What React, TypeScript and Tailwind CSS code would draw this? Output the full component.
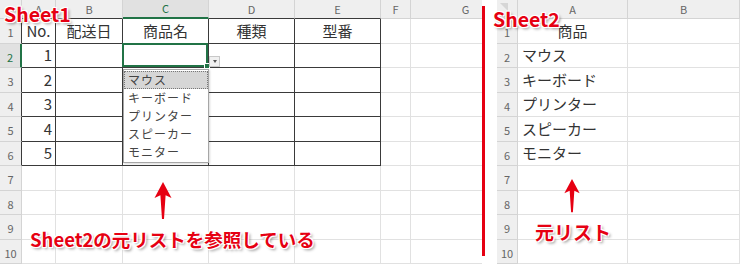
import React from "react";

const JP = "font-['Noto_Sans_CJK_JP','Noto_Sans',sans-serif]";
const LABEL =
  "font-bold text-[#e60012] leading-none [text-shadow:-1px_-1px_0_#fff,1px_-1px_0_#fff,-1px_1px_0_#fff,1px_1px_0_#fff,0_0_3px_#fff,2px_2px_3px_rgba(0,0,0,0.45)]";

const leftCols = ["A", "B", "C", "D", "E", "F", "G"];
const leftRows: string[][] = [
  ["No.", "配送日", "商品名", "種類", "型番", "", ""],
  ["1", "", "", "", "", "", ""],
  ["2", "", "", "", "", "", ""],
  ["3", "", "", "", "", "", ""],
  ["4", "", "", "", "", "", ""],
  ["5", "", "", "", "", "", ""],
  ["", "", "", "", "", "", ""],
  ["", "", "", "", "", "", ""],
  ["", "", "", "", "", "", ""],
  ["", "", "", "", "", "", ""],
];

const items = ["マウス", "キーボード", "プリンター", "スピーカー", "モニター"];

function UpArrow({ className }: { className: string }) {
  return (
    <svg viewBox="0 0 20 38" className={className}>
      <path d="M10 0 L18.5 16 L12.6 13.2 L11 37 L9 37 L7.4 13.2 L1.5 16 Z" fill="#e60012" />
    </svg>
  );
}

function Dropdown() {
  return (
    <>
      <div className="absolute -left-px -top-px z-10 h-[calc(100%+1px)] w-[calc(100%+1px)] border-2 border-[#217346]">
        <div className="absolute -bottom-[4px] -right-[4px] h-[6px] w-[6px] border border-white bg-[#217346]" />
      </div>
      <div className="absolute left-[calc(100%+1px)] top-[12px] z-10 flex h-[11px] w-[11px] items-center justify-center border border-[#c8c8c8] bg-[#f0f0f0]">
        <div className="h-0 w-0 border-x-[2.5px] border-t-[3px] border-x-transparent border-t-[#555]" />
      </div>
      <div className="absolute left-0 top-[calc(100%+2px)] z-20 w-[86px] border border-[#a6a6a6] bg-white py-px shadow-[1px_1px_2px_rgba(0,0,0,0.15)]">
        {items.map((t, i) => (
          <div
            key={t}
            className={
              i === 0
                ? "flex h-[18px] items-center border border-dotted border-[#777] bg-[#d6d6d6] pl-[3px] text-[12px] tracking-[1px] text-[#444]"
                : "flex h-[18px] items-center border border-transparent pl-[3px] text-[12px] tracking-[1px] text-[#444]"
            }
          >
            {t}
          </div>
        ))}
      </div>
    </>
  );
}

function LeftSheet() {
  return (
    <div className="h-[265px] w-[482px] shrink-0 overflow-hidden">
      <div className="grid w-[543px] grid-cols-[22px_34px_67px_86px_86px_86px_30px_132px] grid-rows-[19px_repeat(10,24.5px)]">
        <div className="border-b border-r border-[#d4d4d4] bg-[#efefef]" />
        {leftCols.map((c, i) => (
          <div
            key={c}
            className={
              i === 2
                ? "flex items-center justify-center border-b-2 border-r border-b-[#217346] border-r-[#d4d4d4] bg-[#e1e1e1] text-[11px] text-[#217346]"
                : i < 5
                ? "flex items-center justify-center border-b border-r border-b-[#3a3a3a] border-r-[#d4d4d4] bg-[#efefef] text-[11px] text-[#666]"
                : i === 6
                ? "flex items-center justify-center border-b border-r border-[#d4d4d4] bg-[#efefef] pr-[22px] text-[11px] text-[#666]"
                : "flex items-center justify-center border-b border-r border-[#d4d4d4] bg-[#efefef] text-[11px] text-[#666]"
            }
          >
            {c}
          </div>
        ))}
        {leftRows.map((row, r) => (
          <React.Fragment key={r}>
            <div
              className={
                r === 1
                  ? "flex items-center justify-center border-b border-r-2 border-b-[#d4d4d4] border-r-[#217346] bg-[#e1e1e1] pt-[3px] text-[11px] text-[#217346]"
                  : r < 6
                  ? "flex items-center justify-center border-b border-r border-b-[#d4d4d4] border-r-[#3a3a3a] bg-[#efefef] pt-[3px] text-[11px] text-[#666]"
                  : "flex items-center justify-center border-b border-r border-[#d4d4d4] bg-[#efefef] pt-[3px] text-[11px] text-[#666]"
              }
            >
              {r + 1}
            </div>
            {row.map((v, c) => {
              const inTable = r < 6 && c < 5;
              const border = inTable
                ? "border-b border-r border-[#3a3a3a]"
                : "border-b border-r border-[#e1e1e1]";
              const align =
                r === 0 ? "justify-center" : c === 0 ? "justify-end pr-[3px]" : "justify-start";
              return (
                <div
                  key={c}
                  className={`relative flex items-center ${align} ${border} text-[15px] text-[#333]`}
                >
                  {v}
                  {r === 1 && c === 2 && <Dropdown />}
                </div>
              );
            })}
          </React.Fragment>
        ))}
      </div>
    </div>
  );
}

const rightRows = ["商品", ...items, "", "", "", ""];

function RightSheet() {
  return (
    <div className="h-[265px] w-[243px] shrink-0 overflow-hidden">
      <div className="grid grid-cols-[21px_110px_112px] grid-rows-[19px_repeat(10,24.5px)]">
        <div className="relative border-b border-r border-[#d4d4d4] bg-[#efefef]">
          <div className="absolute left-[3px] top-[3px] h-0 w-0 border-l-[8px] border-t-[8px] border-l-transparent border-t-[#d6d6d6]" />
        </div>
        <div className="flex items-center justify-center border-b border-r border-[#d4d4d4] bg-[#efefef] text-[11px] text-[#666]">
          A
        </div>
        <div className="flex items-center justify-center border-b border-r border-[#d4d4d4] bg-[#efefef] text-[11px] text-[#666]">
          B
        </div>
        {rightRows.map((v, r) => (
          <React.Fragment key={r}>
            <div className="flex items-center justify-center border-b border-r border-[#d4d4d4] bg-[#efefef] pt-[3px] text-[11px] text-[#666]">
              {r + 1}
            </div>
            <div
              className={
                r === 0
                  ? "flex items-center justify-center border-b border-r border-[#e1e1e1] text-[15px] text-[#333]"
                  : "flex items-center border-b border-r border-[#e1e1e1] pl-[4px] text-[15px] text-[#333]"
              }
            >
              {v}
            </div>
            <div className="border-b border-r border-[#e1e1e1]" />
          </React.Fragment>
        ))}
      </div>
    </div>
  );
}

export default function App() {
  return (
    <div className={`relative flex h-[265px] w-[740px] overflow-hidden bg-white ${JP}`}>
      <LeftSheet />
      <div className="mt-[6px] h-[250px] w-[3px] shrink-0 bg-[#e60012]" />
      <div className="w-[12px] shrink-0" />
      <RightSheet />

      <div className={`absolute left-[4px] top-[4px] text-[19.5px] ${LABEL}`}>Sheet1</div>
      <div className={`absolute left-[493px] top-[9px] text-[19.5px] ${LABEL}`}>Sheet2</div>

      <UpArrow className="absolute left-[153px] top-[182px] h-[38px] w-[20px]" />
      <UpArrow className="absolute left-[563px] top-[178px] h-[36px] w-[18px]" />

      <div className={`absolute left-[30px] top-[230px] text-[18.5px] ${LABEL}`}>
        Sheet2の元リストを参照している
      </div>
      <div className={`absolute left-[535px] top-[222px] text-[19px] ${LABEL}`}>元リスト</div>
    </div>
  );
}
